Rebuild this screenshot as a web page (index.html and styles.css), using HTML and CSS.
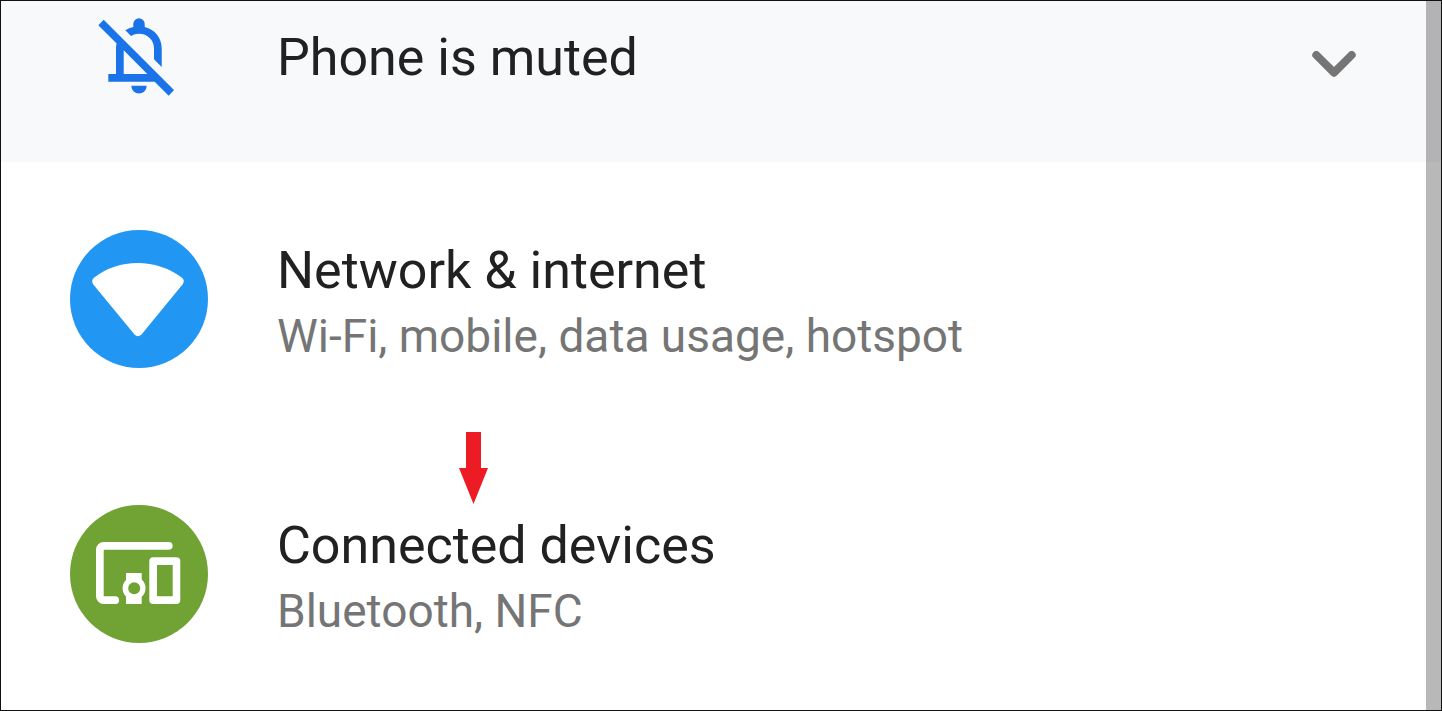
FILE: index.html
```
<!DOCTYPE html>
<html lang="en">
<head>
    <meta charset="UTF-8">
    <title>Settings</title>
    <link rel="stylesheet" href="styles.css">
</head>
<body>
    <main class="screen">
        <div class="banner">
            <div class="icon-slot">
                <svg class="bell" viewBox="0 0 92 92" aria-hidden="true">
                    <path d="M5.3 16.3L10.7 10.7L81 81L75.7 86.7L61.7 72.7H15.3V65H23V39.3Q23 36 23.6 34.6ZM30.7 41.3V65H54.3Z"/>
                    <path d="M32.3 21.3Q36 18.8 40.3 18V15A5.7 5.7 0 0 1 51.7 15V18C62 20.5 68.7 29 68.7 39.3V58L61 50.3V39.3C61 31 54.5 24.7 46 24.7Q41.5 24.7 38 27Z"/>
                    <path d="M38.3 76.7H53.7A7.7 7.7 0 0 1 38.3 76.7Z"/>
                </svg>
            </div>
            <h2 class="title">Phone is muted</h2>
            <button class="expand" type="button" aria-label="Expand">
                <svg viewBox="0 0 44 26" aria-hidden="true">
                    <path d="M4.3 4L22 21.7L39.7 4"/>
                </svg>
            </button>
        </div>

        <nav class="list">
            <a class="row" href="#network">
                <span class="icon-slot network">
                    <svg viewBox="0 0 138 138" aria-hidden="true">
                        <path d="M24.3 47.5Q43 33 67.7 33Q92 33 111.7 47.5Q115.5 50.5 112.5 54.5L71.5 104.5Q67.7 108 64.5 104.5L23.3 54.5Q20.5 50.5 24.3 47.5Z"/>
                    </svg>
                </span>
                <span class="text">
                    <span class="title">Network &amp; internet</span>
                    <span class="summary">Wi-Fi, mobile, data usage, hotspot</span>
                </span>
            </a>
            <a class="row" href="#devices">
                <span class="icon-slot devices">
                    <svg viewBox="0 0 138 138" aria-hidden="true">
                        <path d="M33.7 37H98.8A3.85 3.85 0 0 1 98.8 44.7H33.7V91.3H45.2A3.85 3.85 0 0 1 45.2 99H33.7A7.7 7.7 0 0 1 26 91.3V44.7A7.7 7.7 0 0 1 33.7 37Z"/>
                        <path fill-rule="evenodd" d="M83.3 52.3H106.3A4 4 0 0 1 110.3 56.3V95A4 4 0 0 1 106.3 99H83.3A4 4 0 0 1 79.3 95V56.3A4 4 0 0 1 83.3 52.3ZM87 60V91.3H102.7V60Z"/>
                        <path fill-rule="evenodd" d="M56 68H71.7V74.6A11.6 11.6 0 0 1 71.7 91.8V99H56V91.4A11.6 11.6 0 0 1 56 75ZM64.2 77.2A6 6 0 0 0 64.2 89.2A6 6 0 0 0 64.2 77.2Z"/>
                    </svg>
                </span>
                <span class="text">
                    <span class="title">Connected devices</span>
                    <span class="summary">Bluetooth, NFC</span>
                </span>
                <svg class="pointer" viewBox="0 0 29 72" aria-hidden="true">
                    <path d="M7 0H22V36H29L14.5 72L0 36H7Z"/>
                </svg>
            </a>
        </nav>
        <div class="scrollbar"></div>
    </main>
</body>
</html>
```

FILE: styles.css
```
* {
    box-sizing: border-box;
}
body {
    margin: 0;
    font-family: Roboto, sans-serif;
    background-color: #fff;
}
.screen {
    position: relative;
    height: 100vh;
    border: 1px solid #111;
    overflow: hidden;
}
.banner {
    display: flex;
    align-items: flex-start;
    height: 161px;
    padding: 8px 85px 0 69px;
    background-color: #f8f9fb;
}
.icon-slot {
    display: flex;
    flex: none;
    justify-content: center;
    width: 138px;
    margin-right: 69px;
}
.bell {
    width: 92px;
    height: 92px;
    fill: #1a73e8;
}
.title {
    margin: 0;
    color: #212121;
    font-size: 52px;
    font-weight: 400;
    line-height: 66px;
}
.banner .title {
    flex: 1;
    padding-top: 16px;
}
.expand {
    margin: 42px 0 0;
    padding: 0;
    border: 0;
    background: none;
    cursor: pointer;
}
.expand svg {
    display: block;
    width: 44px;
    height: 26px;
    fill: none;
    stroke: #757575;
    stroke-width: 8;
    stroke-linecap: round;
    stroke-linejoin: round;
}
.row {
    position: relative;
    display: flex;
    align-items: flex-start;
    height: 275px;
    padding: 68px 69px;
    text-decoration: none;
}
.row .icon-slot {
    height: 138px;
    border-radius: 50%;
}
.row .icon-slot svg {
    width: 138px;
    height: 138px;
    fill: #fff;
}
.network {
    background-color: #2196f3;
}
.devices {
    background-color: #71a234;
}
.text {
    display: flex;
    flex-direction: column;
    padding-top: 8px;
}
.summary {
    color: #757575;
    font-size: 46px;
    line-height: 64px;
}
.pointer {
    position: absolute;
    top: -5px;
    left: 458px;
    width: 29px;
    height: 72px;
    fill: #ed1c24;
}
.scrollbar {
    position: absolute;
    top: 0;
    right: 0;
    bottom: 0;
    width: 15px;
    background-color: rgba(0, 0, 0, 0.28);
}
```
